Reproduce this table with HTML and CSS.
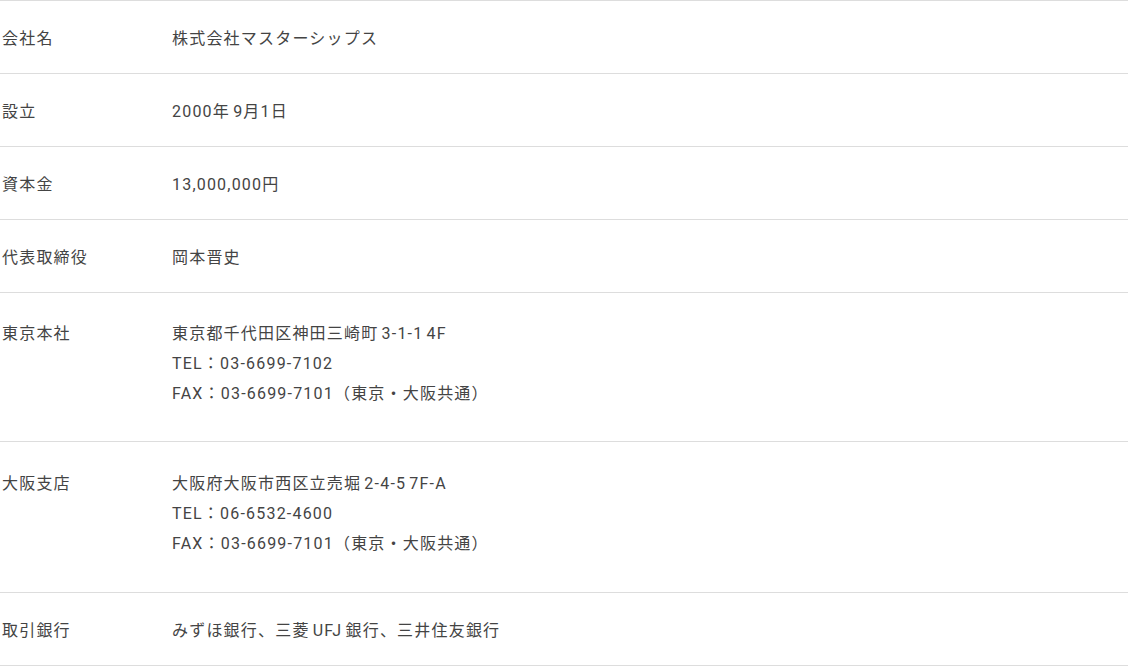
FILE: index.html
```html
<!DOCTYPE html>
<html lang="ja">
<head>
<meta charset="utf-8">
<link rel="stylesheet" href="styles.css">
</head>
<body>
<table class="info">
  <tr><th>会社名</th><td>株式会社マスターシップス</td></tr>
  <tr><th>設立</th><td>2000年 9月1日</td></tr>
  <tr><th>資本金</th><td>13,000,000円</td></tr>
  <tr><th>代表取締役</th><td>岡本晋史</td></tr>
  <tr class="multi tokyo"><th>東京本社</th><td>東京都千代田区神田三崎町 3-1-1 4F<br>TEL：03-6699-7102<br>FAX：03-6699-7101（東京・大阪共通）</td></tr>
  <tr class="multi osaka"><th>大阪支店</th><td>大阪府大阪市西区立売堀 2-4-5 7F-A<br>TEL：06-6532-4600<br>FAX：03-6699-7101（東京・大阪共通）</td></tr>
  <tr><th>取引銀行</th><td>みずほ銀行、三菱 UFJ 銀行、三井住友銀行</td></tr>
</table>
</body>
</html>
```
FILE: styles.css
```css
html, body {
  margin: 0;
  padding: 0;
  background: #fff;
}
body {
  font-family: "Roboto", "Noto Sans CJK JP", sans-serif;
  font-size: 16px;
  color: #444;
  letter-spacing: 0.075em;
  word-spacing: -2px;
}
.info {
  width: 1128px;
  border-collapse: collapse;
  border-top: 1px solid #ddd;
}
.info tr {
  border-bottom: 1px solid #ddd;
}
.info th, .info td {
  font-weight: normal;
  text-align: left;
  vertical-align: top;
  line-height: 30px;
  padding: 23px 0 19px;
}
.info th {
  width: 170px;
  padding-left: 2px;
}
.info .tokyo th, .info .tokyo td {
  padding: 26px 0 32px;
}
.info .tokyo th { padding-left: 2px; }
.info .osaka th, .info .osaka td {
  padding: 27px 0 33px;
}
.info .osaka th { padding-left: 2px; }
```
